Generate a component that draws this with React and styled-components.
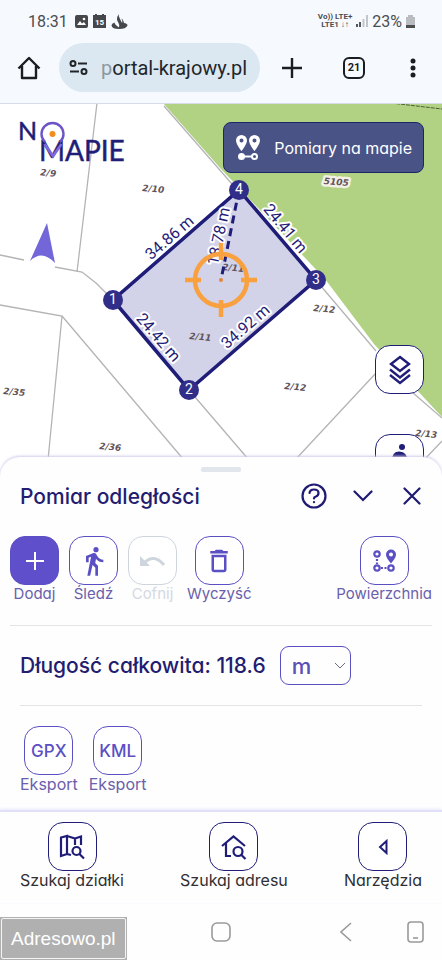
import styled, { createGlobalStyle } from 'styled-components'
import { MdDirectionsWalk, MdOutlineDelete } from 'react-icons/md'

const GlobalStyle = createGlobalStyle`
  * {
    box-sizing: border-box;
  }
  body {
    margin: 0;
    background: #fefefe;
    font-family: Inter, "Open Sans", sans-serif;
    font-feature-settings: "cv11";
  }
  button, select {
    font: inherit;
    font-feature-settings: inherit;
    cursor: pointer;
  }
  svg {
    display: block;
  }
`;

const Page = styled.div`
  min-height: 100vh;
  display: flex;
  flex-direction: column;
  overflow: hidden;
`;

const StatusBar = styled.div`
  display: flex;
  align-items: center;
  height: 42px;
  padding: 0 27px 0 28px;
  background: #f6f9fe;
  color: #4b4d50;
  font-family: Roboto, sans-serif;
  font-size: 16px;
`;

const StatusIcons = styled.div`
  display: flex;
  align-items: center;
  gap: 5px;
  margin-left: 7px;
`;

const StatusRight = styled.div`
  display: flex;
  align-items: center;
  gap: 4px;
  margin-left: auto;
`;

const Carrier = styled.div`
  font-size: 8px;
  font-weight: 700;
  line-height: 8px;
  text-align: center;
`;

const BrowserBar = styled.div`
  display: flex;
  align-items: center;
  height: 61px;
  padding: 0 16px 10px;
  background: #f6f9fe;
`;

const BarButton = styled.button`
  display: flex;
  align-items: center;
  justify-content: center;
  width: ${props => props.$width || 26}px;
  height: 32px;
  padding: 0;
  border: 0;
  background: none;
  color: #1a1d21;
`;

const Address = styled.button`
  flex: 1;
  display: flex;
  align-items: center;
  gap: 12px;
  height: 49px;
  margin: 0 16px 0 17px;
  padding: 0 9px;
  border: 0;
  border-radius: 25px;
  background: #dbe8f1;
  color: #22262a;
  font-family: Roboto, sans-serif;
  font-size: 20px;
  white-space: nowrap;
`;

const Faded = styled.span`
  color: #8d979f;
`;

const TabCount = styled.span`
  display: flex;
  align-items: center;
  justify-content: center;
  width: 22px;
  height: 22px;
  border: 2px solid #1a1d21;
  border-radius: 6px;
  font-family: Roboto, sans-serif;
  font-size: 11px;
  font-weight: 700;
`;

const BarActions = styled.div`
  display: flex;
  align-items: center;
  gap: 33px;
`;

const MapArea = styled.section`
  position: relative;
  overflow: hidden;
  background: #fff;
`;

const MapSvg = styled.svg`
  width: 100%;
  height: auto;
`;

const ParcelText = styled.text`
  fill: #62545a;
  font-family: "DejaVu Sans", sans-serif;
  font-size: 9px;
  font-weight: 700;
  font-style: italic;
  text-anchor: middle;
  paint-order: stroke;
  stroke: ${props => props.$halo || 'none'};
  stroke-width: 5px;
  stroke-linejoin: round;
`;

const LengthText = styled.text`
  fill: #1f1d78;
  font-family: Roboto, sans-serif;
  font-size: 16px;
  text-anchor: middle;
  paint-order: stroke;
  stroke: #fff;
  stroke-width: 4px;
  stroke-linejoin: round;
`;

const NodeText = styled.text`
  fill: #fff;
  font-family: Roboto, sans-serif;
  font-size: 14px;
  text-anchor: middle;
`;

const LogoText = styled.text`
  fill: #1f1d78;
  stroke: #1f1d78;
  stroke-width: .5px;
  font-family: Lato, sans-serif;
  font-size: ${props => props.$size}px;
`;

const Logo = styled.a`
  position: absolute;
  top: 10px;
  left: 10px;
`;

const MeasureButton = styled.button`
  position: absolute;
  top: 19px;
  right: 18px;
  display: flex;
  align-items: center;
  gap: 12px;
  height: 51px;
  padding: 0 11px 0 11px;
  border: 1px solid #1c2668;
  border-radius: 8px;
  background: #4a5386;
  color: #fff;
  font-size: 16px;
`;

const MapControls = styled.div`
  position: absolute;
  top: 242px;
  right: 18px;
  display: flex;
  flex-direction: column;
  gap: 40px;
`;

const SquareButton = styled.button`
  display: flex;
  align-items: center;
  justify-content: center;
  width: 49px;
  height: 49px;
  padding: 0;
  border: 1px solid ${props => props.$color || '#5b4fc4'};
  border-radius: 15px;
  background: ${props => (props.$filled ? '#5f4fcb' : '#fff')};
  color: ${props => (props.$filled ? '#fff' : props.$color || '#5b4fc4')};
  font-size: 17px;
  font-weight: 500;
`;

const Sheet = styled.section`
  position: relative;
  margin-top: -20px;
  padding: 10px 10px 17px;
  border-radius: 20px 20px 0 0;
  background: #fefefe;
  box-shadow: 0 -1px 3px #cfcbea;
`;

const Handle = styled.div`
  width: 40px;
  height: 5px;
  margin: 0 auto;
  border-radius: 2px;
  background: #e1e6ed;
`;

const SheetHeader = styled.header`
  display: flex;
  align-items: center;
  height: 48px;
  padding: 0 7px 0 10px;
`;

const Title = styled.h2`
  flex: 1;
  margin: 0;
  color: #221d70;
  font-size: 21px;
  font-weight: 500;
`;

const HeaderActions = styled.div`
  display: flex;
  gap: 23px;
  color: #1f1a72;
`;

const Tools = styled.div`
  display: flex;
  gap: 10px;
  padding: 16px 0 22px;
`;

const Tool = styled.label`
  display: flex;
  flex-direction: column;
  align-items: center;
  min-width: 49px;
  margin-left: ${props => (props.$end ? 'auto' : '0')};
  color: ${props => props.$color || '#6a60ab'};
  font-size: ${props => (props.$large ? 16 : 15)}px;
  line-height: 18px;
  white-space: nowrap;
`;

const Divider = styled.hr`
  height: 1px;
  margin: 0 ${props => props.$inset || 0}px;
  border: 0;
  background: #e4e4e8;
`;

const Total = styled.div`
  display: flex;
  align-items: center;
  gap: 14px;
  height: 79px;
  padding: 0 10px;
  color: #221d70;
  font-size: 21px;
  font-weight: 500;
`;

const SelectBox = styled.div`
  display: grid;
  align-items: center;
  width: 71px;
  height: 39px;
  border: 1px solid #5b4fc4;
  border-radius: 9px;
  color: #5b4fb8;

  > * {
    grid-area: 1 / 1;
  }
  svg {
    justify-self: end;
    margin-right: 4px;
    pointer-events: none;
  }
`;

const Select = styled.select`
  appearance: none;
  width: 100%;
  height: 100%;
  padding: 0 11px;
  border: 0;
  background: none;
  color: inherit;
  font-size: 22px;
`;

const Exports = styled.div`
  display: flex;
  gap: 11px;
  padding: 20px 10px 0;
`;

const BottomNav = styled.nav`
  position: relative;
  display: flex;
  justify-content: space-between;
  padding: 10px 20px 14px;
  border-top: 2px solid #e2dffa;
  background: #fefefe;
  box-shadow: 0 -1px 3px #e8e6fb;
`;

const SystemNav = styled.div`
  flex: 1;
  display: grid;
  grid-template-columns: 1fr auto 1fr;
  align-items: center;
  min-height: 57px;
  color: #9a9a9c;
`;

const Watermark = styled.span`
  align-self: end;
  justify-self: start;
  padding: 1px;
  background: #b0b0b0;

  span {
    display: block;
    padding: 0 9px;
    border: 1px solid #f4f4f4;
    border-radius: 2px;
    color: #fff;
    font-family: "Liberation Sans", sans-serif;
    font-size: 19px;
    line-height: 39px;
  }
`;

const SystemRight = styled.div`
  display: flex;
  align-items: center;
  justify-content: flex-end;
  gap: 55px;
  padding-right: 18px;
`;

const parcels = [
  ['2/9', 48, 176],
  ['2/10', 153, 192],
  ['5105', 336, 185, '#f3f1e6'],
  ['2/12', 324, 312],
  ['2/12', 295, 390],
  ['2/13', 426, 437],
  ['2/36', 110, 450],
  ['2/35', 14, 395],
  ['2/11', 200, 340],
  ['2/11', 233, 271],
]

const lengths = [
  ['34.86 m', 169, 237, -41],
  ['24.42 m', 159, 337, 49],
  ['34.92 m', 245, 326, -41],
  ['24.41 m', 286, 228, 50],
  ['18.78 m', 218, 236, -78],
]

const nodes = [
  [1, 113, 300],
  [2, 189, 390],
  [3, 316, 280],
  [4, 239, 190],
]

function ParcelMap() {
  return (
    <MapSvg viewBox="0 103 442 374" role="img" aria-label="Mapa działek">
      <path d="M163 103L221 169L240 189L325 279L374 344L442 417V103Z" fill="#b1d282" />
      <g fill="none" stroke="#b4b4b6" strokeWidth="1.3">
        <path d="M97 103L77 272M0 255L24 260M55 267L82 272L96 283L112 299" />
        <path d="M0 305L62 316L48 460M62 316L184 460" />
        <path d="M189 390L249 460M376 373L295 460M442 441L424 460" />
        <path d="M164 106L232 184M320 285L376 351M412 392L442 418" />
      </g>
      <path d="M391 103L442 109" stroke="#4e5f3c" strokeDasharray="4 1" />
      <path d="M0 103H442" stroke="#d5dbe8" strokeWidth="2" />
      <path d="M113 300L189 390L316 280L239 190Z" fill="#1f1d8a" fillOpacity=".2" stroke="#1f1d78" strokeWidth="3.5" />
      {parcels.map(([name, x, y, halo]) => (
        <ParcelText key={name + x} x={x} y={y} $halo={halo} transform={`rotate(5 ${x} ${y})`}>{name}</ParcelText>
      ))}
      <path d="M239 190L221 280" stroke="#1f1d78" strokeWidth="3" strokeDasharray="8 5" />
      {lengths.map(([text, x, y, angle]) => (
        <LengthText key={text} x={x} y={y + 6} transform={`rotate(${angle} ${x} ${y})`}>{text}</LengthText>
      ))}
      {nodes.map(([label, x, y]) => (
        <g key={label}>
          <circle cx={x} cy={y} r="10" fill="#302e88" />
          <NodeText x={x} y={y + 4}>{label}</NodeText>
        </g>
      ))}
      <g fill="none" stroke="#f9a03f" strokeWidth="4.500">
        <circle cx="221" cy="280" r="26" />
        <path d="M185 280H201M241 280H257M221 243V260M221 300V317" />
      </g>
      <circle cx="221" cy="280" r="2" fill="#e8863a" />
      <path d="M47 223L55 263Q42 249 30 261Z" fill="#7266d8" />
    </MapSvg>
  )
}

function LogoMark() {
  return (
    <svg width="130" height="62" viewBox="10 113 130 62" fill="none">
      <LogoText x="18" y="140" $size={25}>N</LogoText>
      <LogoText x="39" y="161" $size={28}>MAPIE</LogoText>
      <path d="M44.500 141.500A11 11 0 1 1 60.500 141.500" stroke="#6d55c8" strokeWidth="2.400" strokeLinecap="round" />
      <path d="M44.500 144L53 156L61.500 144" stroke="#7a68dc" strokeWidth="2.800" />
      <circle cx="52.500" cy="134" r="3" fill="#f28c1e" />
    </svg>
  )
}

function PinsIcon() {
  return (
    <svg width="27" height="26" viewBox="0 0 27 26" fill="currentColor">
      <path fillRule="evenodd" d="M6.500 0a5.500 5.500 0 0 0-5.500 5.500C1 9.500 6.500 16 6.500 16S12 9.500 12 5.500A5.500 5.500 0 0 0 6.500 0Zm0 3.500a2 2 0 1 1 0 4 2 2 0 0 1 0-4ZM19.500 0A5.500 5.500 0 0 0 14 5.500C14 9.500 19.500 16 19.500 16S25 9.500 25 5.500A5.500 5.500 0 0 0 19.500 0Zm0 3.500a2 2 0 1 1 0 4 2 2 0 0 1 0-4Z" />
      <circle cx="6.500" cy="21.500" r="3.500" />
      <path d="M9 21.500H17" stroke="currentColor" strokeWidth="2" />
      <circle cx="19.500" cy="21.500" r="2.500" fill="none" stroke="currentColor" strokeWidth="2" />
    </svg>
  )
}

function LayersIcon() {
  return (
    <svg width="24" height="30" viewBox="0 0 24 30" fill="none" stroke="currentColor" strokeWidth="2.400">
      <path d="M12 2L21 9L12 16L3 9ZM2 14.500L12 22.500L22 14.500M2 20L12 28L22 20" />
    </svg>
  )
}

function AreaIcon() {
  return (
    <svg width="24" height="24" viewBox="0 0 24 24" fill="none" stroke="currentColor" strokeWidth="2.200">
      <circle cx="5" cy="5" r="2.700" />
      <circle cx="5" cy="19" r="2.700" />
      <circle cx="19" cy="19" r="2.700" />
      <path d="M5 10V15M9 19H15" strokeDasharray="2 1.500" />
      <path fill="currentColor" stroke="none" fillRule="evenodd" d="M19 .5A5 5 0 0 0 14 5.500C14 9 19 14.500 19 14.500S24 9 24 5.500A5 5 0 0 0 19 .5Zm0 3a2 2 0 1 1 0 4 2 2 0 0 1 0-4Z" />
    </svg>
  )
}

function ToolItem({ label, icon, color, textColor, filled, end, large }) {
  return (
    <Tool $color={textColor} $end={end} $large={large}>
      <SquareButton $color={color} $filled={filled}>{icon}</SquareButton>
      {label}
    </Tool>
  )
}

function App() {
  return (
    <>
    <GlobalStyle />
    <Page>
      <StatusBar>
        <span>18:31</span>
        <StatusIcons>
          <svg width="13" height="13" viewBox="0 0 13 13">
            <rect width="13" height="13" rx="2" fill="#45474a" />
            <path d="M2 10L5 6L7 8.500L9 7L11 10Z" fill="#fff" />
            <circle cx="9" cy="4" r="1.300" fill="#fff" />
          </svg>
          <svg width="13" height="14" viewBox="0 0 13 14">
            <path d="M0 1H2V0H4V1H9V0H11V1H13V14H0Z" fill="#45474a" />
            <text x="6.500" y="10.500" fill="#fff" fontSize="8" fontWeight="700" textAnchor="middle">15</text>
          </svg>
          <svg width="17" height="15" viewBox="0 0 17 15" fill="#45474a">
            <path d="M8 0Q7 2 9 5L11 9Q12 7 10.500 4.500Q12 5 13 9Q16.500 9.500 16.500 11.500Q15 15 8 15Q1 15 .5 11.500Q.5 9.500 3.500 8.500Q3.500 10 6 12L8 13.500Q9 11.500 7.500 9L6 6Q6 2 8 0Z" />
          </svg>
        </StatusIcons>
        <StatusRight>
          <Carrier>Vo)) LTE+<br />LTE1 ↓↑</Carrier>
          <svg width="12" height="12" viewBox="0 0 12 12">
            <path d="M1 12V9M4 12V7" stroke="#55575a" strokeWidth="2" />
            <path d="M7.500 12V4M11 12V0" stroke="#c2c5c9" strokeWidth="2" />
          </svg>
          <span>23%</span>
          <svg width="9" height="13" viewBox="0 0 9 13">
            <path d="M0 2H2V0H7V2H9V13H0Z" fill="#b9bcc0" />
            <path d="M0 10H9V13H0Z" fill="#4b4d50" />
          </svg>
        </StatusRight>
      </StatusBar>
      <BrowserBar>
        <BarButton aria-label="Strona główna">
          <svg width="24" height="24" viewBox="0 0 24 24" fill="none" stroke="currentColor" strokeWidth="2.400" strokeLinejoin="round">
            <path d="M1.500 12.500L12 2L22.500 12.500M5 10V22H19V10" />
          </svg>
        </BarButton>
        <Address>
          <svg width="21" height="18" viewBox="0 0 21 18" fill="none" stroke="currentColor" strokeWidth="2">
            <circle cx="5" cy="4.500" r="2.500" />
            <circle cx="16" cy="12.500" r="2.500" />
            <path d="M10 4.500H19M2 12.500H11" />
          </svg>
          <span><Faded>p</Faded>ortal-krajowy.pl</span>
        </Address>
        <BarActions>
          <BarButton $width={32} aria-label="Nowa karta">
            <svg width="20" height="20" viewBox="0 0 20 20" stroke="currentColor" strokeWidth="2.400">
              <path d="M10 0V20M0 10H20" />
            </svg>
          </BarButton>
          <BarButton aria-label="Karty"><TabCount>21</TabCount></BarButton>
          <BarButton aria-label="Menu">
            <svg width="6" height="20" viewBox="0 0 6 20" fill="currentColor">
              <circle cx="3" cy="3" r="2.500" />
              <circle cx="3" cy="10" r="2.500" />
              <circle cx="3" cy="17" r="2.500" />
            </svg>
          </BarButton>
        </BarActions>
      </BrowserBar>
      <MapArea>
        <ParcelMap />
        <Logo href="#" aria-label="Na mapie"><LogoMark /></Logo>
        <MeasureButton><PinsIcon />Pomiary na mapie</MeasureButton>
        <MapControls>
          <SquareButton $color="#1f1d78" aria-label="Warstwy"><LayersIcon /></SquareButton>
          <SquareButton $color="#1f1d78" aria-label="Street View">
            <svg width="22" height="30" viewBox="0 0 22 30" fill="currentColor">
              <circle cx="13" cy="3" r="3" />
              <path d="M3 18Q2 8 10 7.500Q19 8 19 18L14 30H8Z" />
            </svg>
          </SquareButton>
        </MapControls>
      </MapArea>
      <Sheet>
        <Handle />
        <SheetHeader>
          <Title>Pomiar odległości</Title>
          <HeaderActions>
            <BarButton aria-label="Pomoc">
              <svg width="26" height="26" viewBox="0 0 26 26" fill="none" stroke="#1f1a72" strokeWidth="2.200" strokeLinecap="round">
                <circle cx="13" cy="13" r="11.500" />
                <path d="M8.500 10Q9 6.500 13 6.500Q17.500 6.500 17.500 10Q17.500 12.500 15 13.500Q13 14 13 15.500M13 19V19.200" />
              </svg>
            </BarButton>
            <BarButton aria-label="Zwiń">
              <svg width="20" height="12" viewBox="0 0 20 12" fill="none" stroke="#1f1a72" strokeWidth="2.200" strokeLinecap="round">
                <path d="M1.500 1.500L10 10L18.500 1.500" />
              </svg>
            </BarButton>
            <BarButton aria-label="Zamknij">
              <svg width="18" height="18" viewBox="0 0 18 18" fill="none" stroke="#1f1a72" strokeWidth="2.200" strokeLinecap="round">
                <path d="M1.500 1.500L16.500 16.500M16.500 1.500L1.500 16.500" />
              </svg>
            </BarButton>
          </HeaderActions>
        </SheetHeader>
        <Tools>
          <ToolItem
            label="Dodaj"
            filled
            icon={<svg width="18" height="18" viewBox="0 0 18 18" stroke="currentColor" strokeWidth="2"><path d="M9 0V18M0 9H18" /></svg>}
          />
          <ToolItem label="Śledź" icon={<MdDirectionsWalk size={32} />} />
          <ToolItem
            label="Cofnij"
            color="#cfd5dd"
            textColor="#d5d8e3"
            icon={<svg width="26" height="12" viewBox="0 0 26 12" fill="none"><path d="M0 1L0 11H10Z" fill="currentColor" /><path d="M4 8Q14-2 24 10" stroke="currentColor" strokeWidth="3" /></svg>}
          />
          <ToolItem label="Wyczyść" icon={<MdOutlineDelete size={30} />} />
          <ToolItem label="Powierzchnia" icon={<AreaIcon />} end />
        </Tools>
        <Divider />
        <Total>
          <span>Długość całkowita: 118.6</span>
          <SelectBox>
            <Select aria-label="Jednostka" defaultValue="m">
              <option>m</option>
              <option>km</option>
            </Select>
            <svg width="12" height="7" viewBox="0 0 12 7" fill="none" stroke="#6c6a80">
              <path d="M1 1L6 6L11 1" />
            </svg>
          </SelectBox>
        </Total>
        <Divider $inset={10} />
        <Exports>
          <ToolItem label="Eksport" icon="GPX" large />
          <ToolItem label="Eksport" icon="KML" large />
        </Exports>
      </Sheet>
      <BottomNav>
        <ToolItem
          label="Szukaj działki"
          color="#1f1d78"
          textColor="#2f2f33"
          large
          icon={
            <svg width="26" height="26" viewBox="0 0 26 26" fill="none" stroke="currentColor" strokeWidth="2.200">
              <path d="M2 3.500L8 2V20L2 22ZM8 2L16 4.500M8 20L12 21M16 11V4.500L22 2.500V11" />
              <circle cx="17.500" cy="17" r="4" />
              <path d="M20.500 20L25 24.500" />
            </svg>
          }
        />
        <ToolItem
          label="Szukaj adresu"
          color="#1f1d78"
          textColor="#2f2f33"
          large
          icon={
            <svg width="26" height="26" viewBox="0 0 26 26" fill="none" stroke="currentColor" strokeWidth="2.200">
              <path d="M1 12L12.500 2.500L24 12M5 9V22H10" />
              <circle cx="17" cy="17.500" r="4.500" />
              <path d="M20 20.500L24.500 25" />
            </svg>
          }
        />
        <ToolItem
          label="Narzędzia"
          color="#1f1d78"
          textColor="#2f2f33"
          large
          icon={
            <svg width="10" height="16" viewBox="0 0 10 16" fill="none" stroke="currentColor" strokeWidth="2">
              <path d="M8.500 2V14L2 8Z" />
            </svg>
          }
        />
      </BottomNav>
      <SystemNav>
        <Watermark><span>Adresowo.pl</span></Watermark>
        <BarButton $width={20} aria-label="Ekran główny">
          <svg width="20" height="20" viewBox="0 0 20 20" fill="none" stroke="#9a9a9c" strokeWidth="1.600">
            <rect x="1" y="1" width="18" height="18" rx="5" />
          </svg>
        </BarButton>
        <SystemRight>
          <BarButton $width={12} aria-label="Wstecz">
            <svg width="12" height="20" viewBox="0 0 12 20" fill="none" stroke="#9a9a9c" strokeWidth="1.600">
              <path d="M11 1L1 10L11 19" />
            </svg>
          </BarButton>
          <BarButton $width={17} aria-label="Telefon">
            <svg width="17" height="22" viewBox="0 0 17 22" fill="none" stroke="#9a9a9c" strokeWidth="1.600">
              <rect x="1" y="1" width="15" height="20" rx="3" />
              <path d="M6 17H11" />
            </svg>
          </BarButton>
        </SystemRight>
      </SystemNav>
    </Page>
    </>
  );
}

export default App;
